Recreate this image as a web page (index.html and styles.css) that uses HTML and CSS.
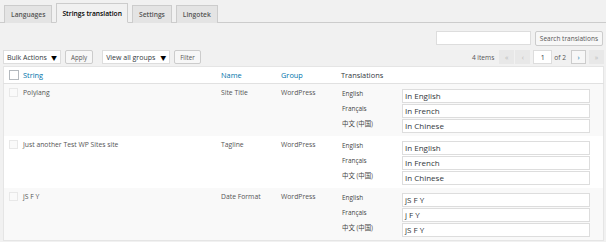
FILE: index.html
```html
<!DOCTYPE html>
<html>
<head>
<meta charset="utf-8">
<link rel="stylesheet" href="styles.css">
</head>
<body>
<div class="wrap">
  <nav class="tabs">
    <span class="tab">Languages</span>
    <span class="tab active">Strings translation</span>
    <span class="tab">Settings</span>
    <span class="tab">Lingotek</span>
  </nav>
  <div class="searchbar">
    <span class="search-input"></span>
    <span class="btn">Search translations</span>
  </div>
  <div class="toolbar">
    <div class="actions">
      <span class="select sel-bulk">Bulk Actions<i class="caret">▼</i></span>
      <span class="btn btn-sm">Apply</span>
      <span class="select sel-group">View all groups<i class="caret">▼</i></span>
      <span class="btn btn-sm">Filter</span>
    </div>
    <div class="pager">
      <span class="count">4 items</span>
      <span class="pbtn dis">«</span>
      <span class="pbtn dis">‹</span>
      <span class="pinput">1</span>
      <span class="of">of 2</span>
      <span class="pbtn on">›</span>
      <span class="pbtn dis">»</span>
    </div>
  </div>
  <table class="list">
    <thead>
      <tr>
        <th class="cb"><span class="check dark"></span></th>
        <th class="c-string link">String</th>
        <th class="c-name link">Name</th>
        <th class="c-group link">Group</th>
        <th class="c-tr">Translations</th>
      </tr>
    </thead>
    <tbody>
      <tr class="alt">
        <td class="cb"><span class="check"></span></td>
        <td>Polylang</td>
        <td>Site Title</td>
        <td>WordPress</td>
        <td class="c-tr">
          <div class="tr"><span class="lang">English</span><span class="field">In English</span></div>
          <div class="tr"><span class="lang">Français</span><span class="field">In French</span></div>
          <div class="tr"><span class="lang">中文 (中国)</span><span class="field">In Chinese</span></div>
        </td>
      </tr>
      <tr>
        <td class="cb"><span class="check"></span></td>
        <td>Just another Test WP Sites site</td>
        <td>Tagline</td>
        <td>WordPress</td>
        <td class="c-tr">
          <div class="tr"><span class="lang">English</span><span class="field">In English</span></div>
          <div class="tr"><span class="lang">Français</span><span class="field">In French</span></div>
          <div class="tr"><span class="lang">中文 (中国)</span><span class="field">In Chinese</span></div>
        </td>
      </tr>
      <tr class="alt">
        <td class="cb"><span class="check"></span></td>
        <td>jS F Y</td>
        <td>Date Format</td>
        <td>WordPress</td>
        <td class="c-tr">
          <div class="tr"><span class="lang">English</span><span class="field">jS F Y</span></div>
          <div class="tr"><span class="lang">Français</span><span class="field">j&nbsp;F Y</span></div>
          <div class="tr"><span class="lang">中文 (中国)</span><span class="field">jS F Y</span></div>
        </td>
      </tr>
    </tbody>
  </table>
</div>
</body>
</html>
```

FILE: styles.css
```css
html, body {
  margin: 0;
  padding: 0;
  background: #f1f1f1;
  font-family: "Open Sans", "Noto Sans CJK SC", sans-serif;
  color: #555;
  overflow: hidden;
}
.wrap {
  width: 606px;
  height: 242px;
  overflow: hidden;
}
.tabs {
  display: flex;
  gap: 4px;
  padding: 4px 0 0 4px;
  height: 18px;
  border-bottom: 1px solid #ccc;
  align-items: flex-end;
}
.tab {
  display: flex;
  align-items: center;
  height: 17px;
  padding: 0 6px;
  font-size: 6.7px;
  font-weight: 600;
  color: #555;
  background: #e4e4e4;
  border: 1px solid #ccc;
  border-bottom: none;
  margin-bottom: -1px;
}
.tab.active {
  background: #f1f1f1;
  color: #000;
  height: 18px;
  padding: 0 5px;
  border-bottom: 1px solid #f1f1f1;
  margin-bottom: -1px;
}
.searchbar {
  display: flex;
  justify-content: flex-end;
  gap: 4px;
  padding: 8px 3px 0 0;
}
.search-input {
  width: 93px;
  height: 12px;
  background: #fff;
  border: 1px solid #ddd;
}
.btn {
  display: flex;
  align-items: center;
  height: 13px;
  padding: 0 4px;
  font-size: 6.5px;
  color: #555;
  background: #f7f7f7;
  border: 1px solid #ccc;
  border-radius: 2px;
}
.toolbar {
  display: flex;
  justify-content: space-between;
  align-items: center;
  padding: 4px 2px 0 3px;
}
.actions {
  display: flex;
  align-items: center;
  gap: 4px;
}
.select {
  display: flex;
  align-items: center;
  justify-content: space-between;
  height: 12px;
  padding: 0 3px;
  font-size: 7px;
  color: #32373c;
  background: #fff;
  border: 1px solid #ddd;
}
.sel-bulk { width: 50px; }
.sel-group { width: 60px; margin-left: 5px; }
.caret {
  font-style: normal;
  font-size: 6px;
  color: #000;
}
.btn-sm { height: 12px; padding: 0 5px; font-size: 6.2px; }
.pager {
  display: flex;
  align-items: center;
  gap: 1px;
  font-size: 6.6px;
  color: #555;
}
.count { margin-right: 4px; }
.pbtn {
  display: flex;
  align-items: center;
  justify-content: center;
  width: 13px;
  height: 12px;
  font-size: 7px;
  border: 1px solid transparent;
}
.pbtn.dis {
  color: #bbb;
  background: #e8e8e8;
  border-color: #e8e8e8;
}
.pbtn.on {
  color: #0073aa;
  background: #f7f7f7;
  border-color: #ccc;
  margin-left: 2px;
  margin-right: 2px;
}
.pinput {
  display: flex;
  align-items: center;
  justify-content: center;
  width: 17px;
  height: 12px;
  margin-left: 2px;
  background: #fff;
  border: 1px solid #ddd;
  color: #32373c;
  font-size: 7px;
}
.of { margin: 0 2px 0 1px; }
.list {
  margin: 2px 0 0 3px;
  width: 601px;
  border-collapse: collapse;
  background: #fff;
  border: 1px solid #e5e5e5;
  table-layout: fixed;
}
.list th {
  height: 16px;
  text-align: left;
  font-weight: normal;
  font-size: 7.4px;
  color: #32373c;
  padding: 0;
  border-bottom: 1px solid #e1e1e1;
}
.list th.link { color: #0073aa; }
.list td {
  vertical-align: top;
  font-size: 6.8px;
  color: #555;
  padding: 4px 0 0 0;
  height: 48px;
}
.list tr.alt td { background: #f9f9f9; }
.cb { width: 14px; }
.c-string { width: 198px; }
.c-name { width: 60px; }
.c-group { width: 60px; }
.list th.cb, .list td.cb { padding-left: 5px; }
.check {
  display: block;
  width: 7px;
  height: 7px;
  border: 1px solid #e8e8e8;
  background: #fafafa;
}
.check.dark { width: 8px; height: 8px; border-color: #b4b9be; background: #fff; }
.list td.cb { padding-top: 4px; }
.list td.c-tr { padding-left: 1px; }
.tr {
  display: flex;
  align-items: center;
  height: 15px;
}
.lang {
  width: 60px;
  font-size: 6.4px;
  color: #444;
  margin-top: -4px;
}
.field {
  display: flex;
  align-items: center;
  width: 184px;
  height: 12px;
  padding-left: 2px;
  background: #fff;
  border: 1px solid #ddd;
  font-size: 8px;
  color: #32373c;
}
```
